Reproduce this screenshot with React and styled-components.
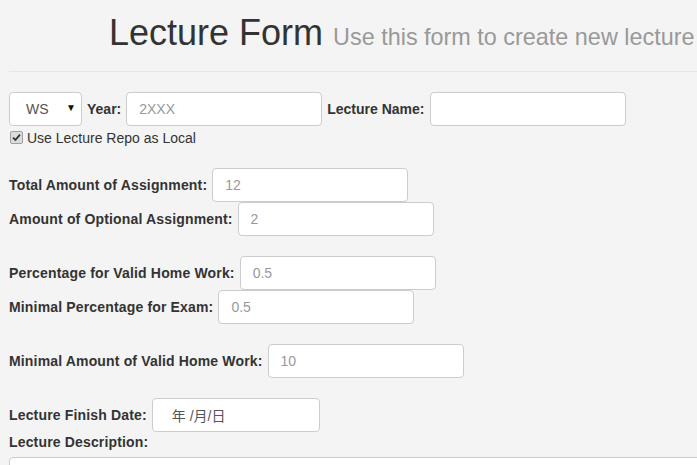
import React from "react";
import styled, { createGlobalStyle } from "styled-components";

const GlobalStyle = createGlobalStyle`
    html, body {
        margin: 0;
        padding: 0;
        background-color: #f4f4f4;
        overflow: hidden;
    }

    body {
        font-family: "Liberation Sans", Arial, Helvetica, sans-serif;
        font-size: 14px;
        color: #333;
    }

    * {
        box-sizing: border-box;
    }
`;

function App() {
    return (
        <>
            <GlobalStyle />
            <Container>
                <Header>
                    <h1>
                        Lecture Form <small>Use this form to create new lecture</small>
                    </h1>
                </Header>

                <Row>
                    <SelectWrap>
                        <Select defaultValue="WS">
                            <option value="WS">WS</option>
                            <option value="SS">SS</option>
                        </Select>
                        <Arrow>▼</Arrow>
                    </SelectWrap>
                    <Label tight>Year:</Label>
                    <Input type="text" placeholder="2XXX" />
                    <Label tight>Lecture Name:</Label>
                    <Input type="text" />
                </Row>

                <CheckRow>
                    <CheckBox>
                        <svg width="9" height="9" viewBox="0 0 9 9">
                            <path d="M1 4.6 L3.4 7 L8 1.6" fill="none" stroke="#333" strokeWidth="1.8" />
                        </svg>
                    </CheckBox>
                    Use Lecture Repo as Local
                </CheckRow>

                <Group>
                    <Row>
                        <Label>Total Amount of Assignment:</Label>
                        <Input type="text" placeholder="12" />
                    </Row>
                    <Row>
                        <Label>Amount of Optional Assignment:</Label>
                        <Input type="text" placeholder="2" />
                    </Row>
                </Group>

                <Group>
                    <Row>
                        <Label>Percentage for Valid Home Work:</Label>
                        <Input type="text" placeholder="0.5" />
                    </Row>
                    <Row>
                        <Label>Minimal Percentage for Exam:</Label>
                        <Input type="text" placeholder="0.5" />
                    </Row>
                </Group>

                <Group>
                    <Row>
                        <Label>Minimal Amount of Valid Home Work:</Label>
                        <Input type="text" placeholder="10" />
                    </Row>
                </Group>

                <Group>
                    <Row>
                        <Label>Lecture Finish Date:</Label>
                        <DateBox>年 /月/日</DateBox>
                    </Row>
                    <BlockLabel>Lecture Description:</BlockLabel>
                    <TextArea rows="4" />
                </Group>
            </Container>
        </>
    );
}

const Container = styled.div`
    padding-left: 9px;
`;

const Header = styled.div`
    padding-bottom: 18px;
    border-bottom: 1px solid #e6e6e6;
    margin-bottom: 20px;

    h1 {
        margin: 13px 0 0 0;
        padding-left: 100px;
        font-size: 36px;
        font-weight: 500;
        line-height: 1.1;
        color: #333;
        white-space: nowrap;
    }

    small {
        font-size: 65%;
        font-weight: normal;
        color: #999;
    }
`;

const Row = styled.div`
    display: flex;
    align-items: center;
    gap: 5px;
    height: 34px;
`;

const Group = styled.div`
    margin-top: 20px;
`;

const Label = styled.label`
    font-weight: bold;
    white-space: nowrap;
    letter-spacing: ${(props) => (props.tight ? "0" : "0.16px")};
`;

const BlockLabel = styled.label`
    display: block;
    font-weight: bold;
    letter-spacing: 0.16px;
    line-height: 20px;
    margin-bottom: 5px;
`;

const Input = styled.input`
    width: 196px;
    height: 34px;
    padding: 6px 12px;
    font-family: "Liberation Sans", Arial, sans-serif;
    font-size: 14px;
    color: #555;
    background-color: #fff;
    border: 1px solid #ccc;
    border-radius: 4px;
    outline: none;

    &::placeholder {
        color: #999;
    }
`;

const SelectWrap = styled.div`
    position: relative;
`;

const Select = styled.select`
    appearance: none;
    width: 73px;
    height: 34px;
    padding: 0 0 0 16px;
    font-family: "Liberation Sans", Arial, sans-serif;
    font-size: 14px;
    color: #555;
    background-color: #fff;
    border: 1px solid #ccc;
    border-radius: 4px;
    outline: none;
`;

const Arrow = styled.span`
    position: absolute;
    right: 6px;
    top: 10px;
    font-size: 10px;
    color: #111;
    pointer-events: none;
`;

const CheckRow = styled.label`
    display: flex;
    align-items: center;
    gap: 4px;
    margin-top: 2px;
    padding-left: 1px;
    line-height: 20px;
    color: #333;
`;

const CheckBox = styled.span`
    display: flex;
    align-items: center;
    justify-content: center;
    width: 13px;
    height: 13px;
    border: 1px solid #a0a0a0;
    border-radius: 2px;
    background-color: #dcdcdc;
`;

const DateBox = styled.div`
    width: 168px;
    height: 34px;
    display: flex;
    align-items: center;
    padding-left: 19px;
    font-family: "Liberation Sans", "Noto Sans CJK SC", sans-serif;
    font-size: 14px;
    color: #555;
    background-color: #fff;
    border: 1px solid #ccc;
    border-radius: 4px;
`;

const TextArea = styled.textarea`
    display: block;
    width: calc(100% + 12px);
    height: 80px;
    padding: 6px 12px;
    font-family: "Liberation Sans", Arial, sans-serif;
    font-size: 14px;
    background-color: #fff;
    border: 1px solid #ccc;
    border-radius: 4px;
    resize: none;
`;

export default App;
